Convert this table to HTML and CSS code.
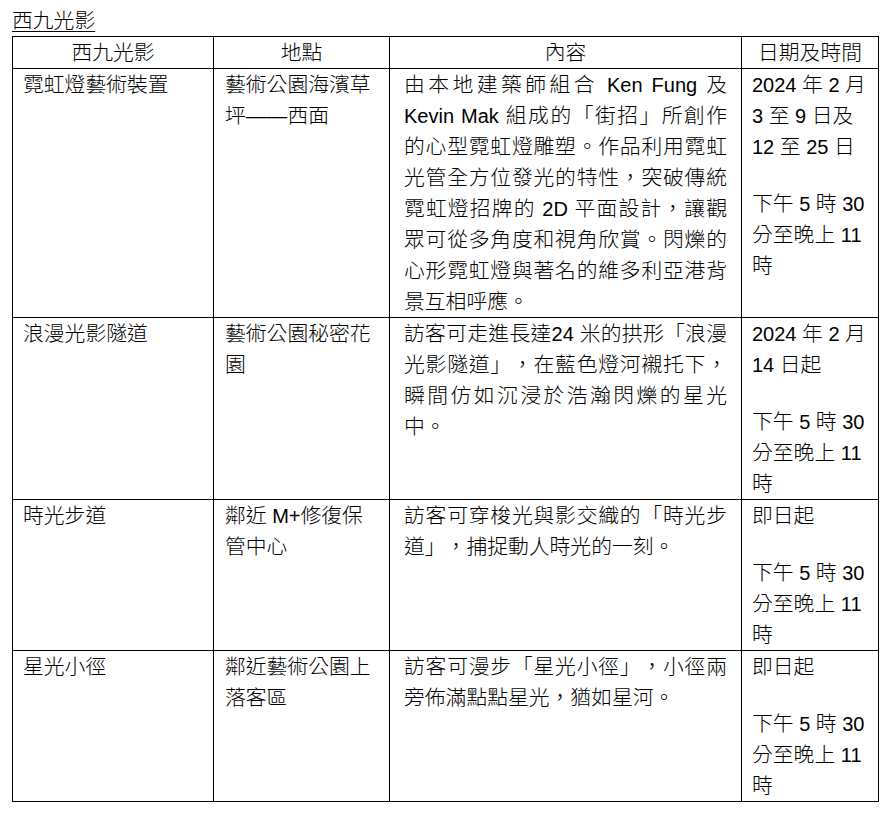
FILE: index.html
```html
<!DOCTYPE html>
<html lang="zh-Hant">
<head>
<meta charset="utf-8">
<title>西九光影</title>
<link rel="stylesheet" href="styles.css">
</head>
<body>
<p class="title">西九光影</p>
<table class="events">
  <colgroup>
    <col class="c-name">
    <col class="c-place">
    <col class="c-desc">
    <col class="c-date">
  </colgroup>
  <thead>
    <tr>
      <th>西九光影</th>
      <th>地點</th>
      <th>內容</th>
      <th>日期及時間</th>
    </tr>
  </thead>
  <tbody>
    <tr>
      <td class="name">霓虹燈藝術裝置</td>
      <td class="place">藝術公園海濱草坪——西面</td>
      <td class="desc">由本地建築師組合<span class="en"> Ken Fung </span>及<span class="en">Kevin Mak </span>組成的「街招」所創作的心型霓虹燈雕塑。作品利用霓虹光管全方位發光的特性，突破傳統霓虹燈招牌的<span class="en"> 2D </span>平面設計，讓觀眾可從多角度和視角欣賞。閃爍的心形霓虹燈與著名的維多利亞港背景互相呼應。</td>
      <td class="date"><p><span class="en">2024 </span>年<span class="en"> 2 </span>月<span class="en"> 3 </span>至<span class="en"> 9 </span>日及<span class="en">12 </span>至<span class="en"> 25 </span>日</p><p class="time">下午<span class="en"> 5 </span>時<span class="en"> 30 </span>分至晚上<span class="en"> 11 </span>時</p></td>
    </tr>
    <tr>
      <td class="name">浪漫光影隧道</td>
      <td class="place">藝術公園秘密花園</td>
      <td class="desc">訪客可走進長達<span class="en">24 </span>米的拱形「浪漫光影隧道」，在藍色燈河襯托下，瞬間仿如沉浸於浩瀚閃爍的星光中。</td>
      <td class="date"><p><span class="en">2024 </span>年<span class="en"> 2 </span>月<span class="en"> 14 </span>日起</p><p class="time">下午<span class="en"> 5 </span>時<span class="en"> 30 </span>分至晚上<span class="en"> 11 </span>時</p></td>
    </tr>
    <tr>
      <td class="name">時光步道</td>
      <td class="place">鄰近<span class="en"> M+</span>修復保管中心</td>
      <td class="desc">訪客可穿梭光與影交織的「時光步道」，捕捉動人時光的一刻。</td>
      <td class="date"><p>即日起</p><p class="time">下午<span class="en"> 5 </span>時<span class="en"> 30 </span>分至晚上<span class="en"> 11 </span>時</p></td>
    </tr>
    <tr>
      <td class="name">星光小徑</td>
      <td class="place">鄰近藝術公園上落客區</td>
      <td class="desc">訪客可漫步「星光小徑」，小徑兩旁佈滿點點星光，猶如星河。</td>
      <td class="date"><p>即日起</p><p class="time">下午<span class="en"> 5 </span>時<span class="en"> 30 </span>分至晚上<span class="en"> 11 </span>時</p></td>
    </tr>
  </tbody>
</table>
</body>
</html>
```
FILE: styles.css
```css
html, body {
  margin: 0;
  background: #ffffff;
}
body {
  padding: 5px 12px 0 12px;
  font-family: "Liberation Sans", "Noto Sans CJK TC", sans-serif;
  font-size: 20.8px;
  font-weight: 300;
  line-height: 31px;
  color: #000000;
  text-spacing-trim: space-all;
}
p {
  margin: 0;
}
.en {
  font-family: "Liberation Sans", Arial, sans-serif;
  font-size: 20px;
  font-weight: 400;
  line-height: 1;
}
.title {
  text-decoration: underline;
  text-underline-offset: 3px;
  text-decoration-thickness: 1px;
}
.events {
  border-collapse: collapse;
  table-layout: fixed;
  width: 866px;
}
.c-name { width: 201px; }
.c-place { width: 176px; }
.c-desc { width: 352px; }
.c-date { width: 137px; }
.events th,
.events td {
  border: 1px solid #000000;
  vertical-align: top;
  padding: 0 10px;
  line-height: 31px;
}
.events th {
  font-weight: 300;
  text-align: center;
}
.events td.place {
  padding: 0 11px 0 11px;
}
.events td.desc {
  padding: 0 14px 0 14px;
  text-align: justify;
}
.events td.date {
  padding: 0 8px 0 10px;
}
.date .time {
  margin-top: 26px;
}
```
